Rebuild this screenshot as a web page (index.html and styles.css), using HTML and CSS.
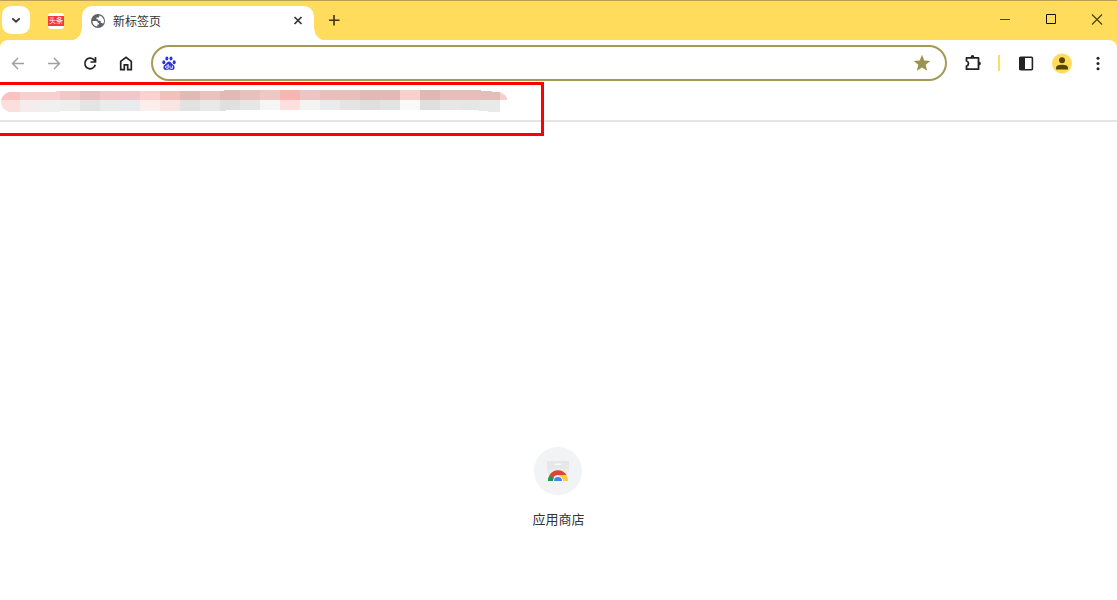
FILE: index.html
```html
<!DOCTYPE html>
<html lang="zh-CN">
<head>
<meta charset="utf-8">
<title>新标签页</title>
<link rel="stylesheet" href="styles.css">
</head>
<body>
<header class="tab-strip">
  <button class="tab-search" aria-label="搜索标签页">
    <svg width="28" height="28" viewBox="0 0 28 28"><path d="M10.300 12.300L14 15.700l3.700-3.400" fill="none" stroke="#333" stroke-width="1.800"/></svg>
  </button>
  <button class="pinned-tab" aria-label="头条">
    <span class="pinned-mark">头条</span>
  </button>
  <div class="tab">
    <svg class="tab-icon" width="14" height="14" viewBox="0 0 14 14"><circle cx="7" cy="7" r="7" fill="#5f6368"/><path d="M1.500 7h3.700q1.600 0 1.600 1.500v.5H8v1.500H6.400v2C3.300 12.300 1.400 9.900 1.500 7zM8.300 1.600v.8q0 1.200-1.300 1.200H5.500v1.700h1.700v1.500h1.600q1 0 1 1v1.200h1.200q.7 0 1 .7 1.300-1.500 1-3.500C12.100 3.800 10.500 2 8.300 1.600z" fill="#fff"/></svg>
    <span class="tab-title">新标签页</span>
    <button class="icon-button tab-close" aria-label="关闭">
      <svg width="16" height="16" viewBox="0 0 16 16"><path d="M4.500 4l7 7M11.500 4l-7 7" stroke="#333" stroke-width="1.700"/></svg>
    </button>
  </div>
  <button class="icon-button new-tab" aria-label="新标签页">
    <svg width="16" height="16" viewBox="0 0 16 16"><path d="M8 3v10.500M3 8.300h10.500" stroke="#37331f" stroke-width="1.600"/></svg>
  </button>
  <div class="window-controls">
    <button class="icon-button" aria-label="最小化"><svg width="46" height="38" viewBox="0 0 46 38"><path d="M18 18.500h10" stroke="#4c421c"/></svg></button>
    <button class="icon-button" aria-label="最大化"><svg width="46" height="38" viewBox="0 0 46 38"><path d="M18.500 13.500h9v9h-9z" fill="none" stroke="#111"/></svg></button>
    <button class="icon-button" aria-label="关闭窗口"><svg width="46" height="38" viewBox="0 0 46 38"><path d="M18 13.500l10 10M28 13.500l-10 10" stroke="#4c421c" stroke-width="1.200"/></svg></button>
  </div>
</header>

<nav class="toolbar">
  <button class="icon-button" aria-label="后退"><svg width="36" height="36" viewBox="0 0 36 36"><path d="M24 18.500H13M18 13l-5.500 5.500L18 24" fill="none" stroke="#a1a1a1" stroke-width="1.500"/></svg></button>
  <button class="icon-button" aria-label="前进"><svg width="36" height="36" viewBox="0 0 36 36"><path d="M12 18.500h11M18 13l5.500 5.500L18 24" fill="none" stroke="#a1a1a1" stroke-width="1.500"/></svg></button>
  <button class="icon-button" aria-label="重新加载"><svg width="36" height="36" viewBox="0 0 36 36"><path d="M23.300 19.800a5.300 5.300 0 1 1-1.500-5.200l1.500 1.700" fill="none" stroke="#222327" stroke-width="1.700"/><path d="M23.500 12v5h-5" fill="none" stroke="#222327" stroke-width="1.700"/></svg></button>
  <button class="icon-button" aria-label="主页"><svg width="36" height="36" viewBox="0 0 36 36"><path d="M12.700 24.700v-8.300L18 12.400l5.300 4v8.300h-3.600v-4.900h-3.400v4.900z" fill="none" stroke="#222327" stroke-width="1.700"/></svg></button>
  <div class="address-bar">
    <svg class="engine-icon" width="14" height="14" viewBox="0 0 14 14"><g fill="#2b31de"><ellipse cx="1.800" cy="6.200" rx="1.500" ry="2"/><ellipse cx="4.900" cy="2.500" rx="1.500" ry="2.100"/><ellipse cx="9" cy="2.500" rx="1.500" ry="2.100"/><ellipse cx="12.200" cy="6.200" rx="1.500" ry="2"/><path d="M7 5.500c1.700 0 2.200 1.500 3.400 2.500 1.200 1.100 2.200 1.900 2.200 3.400 0 1.700-1 2.500-2.600 2.500-1.100 0-1.800-.3-3-.3s-1.900.3-3 .3c-1.600 0-2.600-.8-2.600-2.500 0-1.500 1-2.300 2.200-3.400C4.800 7 5.300 5.500 7 5.500z"/></g><path d="M6.200 8v4.300H4.700q-1.200 0-1.200-1.200T4.700 9.900h1.500M8 9.700v1.700q0 .9.900.9h1.500V9.700" fill="none" stroke="#fff" stroke-width=".9"/></svg>
    <input class="address-input" type="text" aria-label="地址和搜索栏">
    <button class="icon-button" aria-label="收藏"><svg width="18" height="18" viewBox="0 0 18 18"><path d="M9 .8l2.300 5.600 6 .5-4.600 3.900 1.400 5.900L9 13.500l-5.100 3.200 1.400-5.900L.7 6.900l6-.5z" fill="#9b9351"/></svg></button>
  </div>
  <button class="icon-button extensions" aria-label="扩展程序"><svg width="36" height="36" viewBox="0 0 36 36"><path d="M11.500 12.800h12v11.400h-12v-3.200q2-.6 2-2.500t-2-2.500z" fill="none" stroke="#222327" stroke-width="1.800" stroke-linejoin="round"/><path d="M15.600 12.400q0-2.300 1.900-2.300t1.900 2.300zM23.500 16.500q2.400 0 2.400 2t-2.400 2z" fill="#222327"/></svg></button>
  <span class="divider"></span>
  <button class="icon-button" aria-label="侧边栏"><svg width="36" height="36" viewBox="0 0 36 36"><rect x="11.800" y="12.300" width="12.600" height="12.400" rx="1" fill="#fff" stroke="#222327" stroke-width="1.600"/><path d="M11.500 12H17v13h-5.500z" fill="#222327"/></svg></button>
  <button class="icon-button" aria-label="个人资料"><svg width="36" height="36" viewBox="0 0 36 36"><circle cx="18" cy="18.500" r="10" fill="#ffdc5c"/><circle cx="18" cy="15.300" r="3" fill="#574500"/><path d="M12 24.500v-1.800q0-3 6-3t6 3v1.800z" fill="#574500"/></svg></button>
  <button class="icon-button" aria-label="菜单"><svg width="36" height="36" viewBox="0 0 36 36"><g fill="#222327"><circle cx="18" cy="13.300" r="1.500"/><circle cx="18" cy="18.500" r="1.500"/><circle cx="18" cy="23.700" r="1.500"/></g></svg></button>
</nav>

<section class="bookmarks-bar">
  <svg class="mosaic" width="508" height="22" viewBox="0 0 508 22">
    <defs><clipPath id="smudge"><path d="M9 2H56V1H224V0H481V1H492V2H500L505 5 507 8V10H500V22H488V21H479V20H226V21H60V22H9Q1 19 1 12 1 5 9 2z"/></clipPath></defs>
    <g clip-path="url(#smudge)" shape-rendering="crispEdges">
      <path fill="#fcc1c1" d="M0 0h20v10H0z"/><path fill="#f9d0d0" d="M20 0h40v10H20z"/><path fill="#f0c8c8" d="M60 0h20v10H60z"/><path fill="#e7c1c2" d="M80 0h20v10H80z"/><path fill="#f0c8c9" d="M100 0h40v10h-40z"/><path fill="#fed0d0" d="M140 0h20v10h-20z"/><path fill="#f4c1ba" d="M160 0h20v10h-20z"/><path fill="#e2bab5" d="M180 0h20v10h-20z"/><path fill="#e9c2bd" d="M200 0h20v10h-20z"/><path fill="#e2bab5" d="M220 0h20v10h-20z"/><path fill="#e7c1bc" d="M240 0h20v10h-20z"/><path fill="#efc8c3" d="M260 0h20v10h-20z"/><path fill="#f8b4b0" d="M280 0h20v10h-20z"/><path fill="#edc5c2" d="M300 0h20v10h-20z"/><path fill="#e7c0bb" d="M320 0h40v10h-40z"/><path fill="#e1bab5" d="M360 0h40v10h-40z"/><path fill="#f7d0cb" d="M400 0h20v10h-20z"/><path fill="#dfb8b3" d="M420 0h20v10h-20z"/><path fill="#e6bfba" d="M440 0h40v10h-40z"/><path fill="#e3bdb8" d="M480 0h20v10h-20z"/><path fill="#f6cfca" d="M500 0h8v10h-8z"/>
      <path fill="#fbdfdf" d="M0 10h20v12H0z"/><path fill="#f5eded" d="M20 10h20v12H20z"/><path fill="#f0f0f0" d="M40 10h20v12H40z"/><path fill="#eeeeec" d="M60 10h20v12H60z"/><path fill="#e4e4e4" d="M80 10h20v12H80z"/><path fill="#eaeceb" d="M100 10h20v12h-20z"/><path fill="#e9ebee" d="M120 10h20v12h-20z"/><path fill="#fdeeee" d="M140 10h20v12h-20z"/><path fill="#f9e5e2" d="M160 10h20v12h-20z"/><path fill="#e2e2e2" d="M180 10h20v12h-20z"/><path fill="#e9e9e9" d="M200 10h20v12h-20z"/><path fill="#e0e0e0" d="M220 10h20v12h-20z"/><path fill="#e7e7e7" d="M240 10h20v12h-20z"/><path fill="#f6f6f6" d="M260 10h20v12h-20z"/><path fill="#fddfdf" d="M280 10h20v12h-20z"/><path fill="#f3f3f1" d="M300 10h20v12h-20z"/><path fill="#e9ebec" d="M320 10h20v12h-20z"/><path fill="#e4e4e5" d="M340 10h20v12h-20z"/><path fill="#dfdfe0" d="M360 10h20v12h-20z"/><path fill="#e2e4e4" d="M380 10h20v12h-20z"/><path fill="#f9f9f9" d="M400 10h20v12h-20z"/><path fill="#dfdfdf" d="M420 10h20v12h-20z"/><path fill="#e7e7e7" d="M440 10h20v12h-20z"/><path fill="#e5e7e7" d="M460 10h20v12h-20z"/><path fill="#e8eaea" d="M480 10h20v12h-20z"/>
    </g>
  </svg>
  <span class="highlight"></span>
</section>

<main class="page">
  <a class="shortcut" href="#">
    <span class="shortcut-icon">
      <svg width="22" height="22" viewBox="0 0 22 22"><path d="M0 1h22v10q-2.500-2.500-11-2.500T0 11z" fill="#e6e7e8"/><path d="M0 9h22v3l-2 3H2l-2-3z" fill="#eaebec"/><rect x="7.500" y="3.500" width="7" height="1.500" rx=".7" fill="#f8f9fa"/><path d="M1 21a10 10 0 0 1 2-6.500l4 4L6.500 21z" fill="#1e9850"/><path d="M2.500 15a10 10 0 0 1 17 0H11a5 5 0 0 0-4.700 3.300z" fill="#dd4436"/><path d="M11 15h8.500A10 10 0 0 1 21 21h-5z" fill="#ffcd42"/><path d="M6 21a5 5 0 0 1 10 0z" fill="#f1f3f4"/><path d="M7 21a4 4 0 0 1 8 0z" fill="#4285f4"/></svg>
    </span>
    <span class="shortcut-label">应用商店</span>
  </a>
</main>
</body>
</html>
```

FILE: styles.css
```css
* { box-sizing: border-box; }

body {
  margin: 0;
  min-height: 100vh;
  display: flex;
  flex-direction: column;
  background: #fff;
  color: #333;
  font-family: "Liberation Sans", "Noto Sans CJK SC", sans-serif;
  font-size: 12px;
}

button { font: inherit; color: inherit; }
svg { display: block; }

.icon-button {
  padding: 0;
  border: 0;
  background: none;
  flex: none;
}

.tab-strip {
  display: flex;
  align-items: flex-start;
  height: 46px;
  padding-left: 2px;
  overflow: hidden;
  border-top: 1px solid #b7a154;
  background: #ffdc5c;
}

.tab-search {
  width: 28px;
  height: 28px;
  margin-top: 5px;
  padding: 0;
  border: 0;
  border-radius: 9px;
  background: #fff;
}

.pinned-tab {
  display: flex;
  align-items: center;
  width: 16px;
  height: 16px;
  margin: 12px 18px 0;
  padding: 0;
  border: 0;
  border-radius: 3px;
  background: #fff;
}

.pinned-mark {
  width: 16px;
  background: #f6383e;
  color: #fff;
  font-size: 7px;
  line-height: 10px;
  text-align: center;
}

.tab {
  position: relative;
  display: flex;
  align-items: center;
  width: 232px;
  height: 35px;
  margin-top: 5px;
  padding: 0 8px 5px 9px;
  border-radius: 10px 10px 0 0;
  background: #fff;
}

.tab::before,
.tab::after {
  content: "";
  position: absolute;
  bottom: 0;
  width: 12px;
  height: 12px;
}

.tab::before {
  right: 100%;
  background: radial-gradient(circle at 0 0, transparent 11px, #fff 12px);
}

.tab::after {
  left: 100%;
  background: radial-gradient(circle at 100% 0, transparent 11px, #fff 12px);
}

.tab-title {
  flex: 1;
  margin-left: 8px;
  padding-top: 1px;
  line-height: 18px;
}

.new-tab { margin: 11px 0 0 12px; }

.window-controls {
  display: flex;
  margin-left: auto;
  margin-right: -3px;
}

.toolbar {
  position: relative;
  display: flex;
  align-items: center;
  height: 42px;
  margin-top: -6px;
  padding: 4px 1px 0 0;
  border-radius: 8px 8px 0 0;
  background: #fff;
}

.address-bar {
  flex: 1;
  display: flex;
  align-items: center;
  height: 36px;
  margin: 0 8px 0 7px;
  padding: 0 14px 0 9px;
  border: 2px solid #a49a55;
  border-radius: 18px;
  background: #fff;
}

.address-input {
  flex: 1;
  min-width: 0;
  height: 24px;
  margin: 0 8px;
  padding: 0;
  border: 0;
  outline: 0;
  background: none;
  font: inherit;
}

.divider {
  width: 2px;
  height: 16px;
  margin: 0 8px 0 7px;
  background: #ffdc5c;
}

.bookmarks-bar {
  position: relative;
  height: 40px;
  padding-top: 8px;
  border-bottom: 2px solid #e5e5e5;
}

.highlight {
  position: absolute;
  top: 0;
  left: 0;
  width: 544px;
  height: 54px;
  border: 3px solid #f00;
  border-left: 0;
}

.page {
  flex: 1;
  display: flex;
  justify-content: center;
  align-items: flex-end;
  padding-bottom: 70px;
}

.shortcut {
  display: flex;
  flex-direction: column;
  align-items: center;
  gap: 15px;
  color: #333;
  font-size: 13px;
  line-height: 20px;
  text-decoration: none;
}

.shortcut-icon {
  display: grid;
  place-items: center;
  width: 48px;
  height: 48px;
  border-radius: 50%;
  background: #f1f3f4;
}
```
